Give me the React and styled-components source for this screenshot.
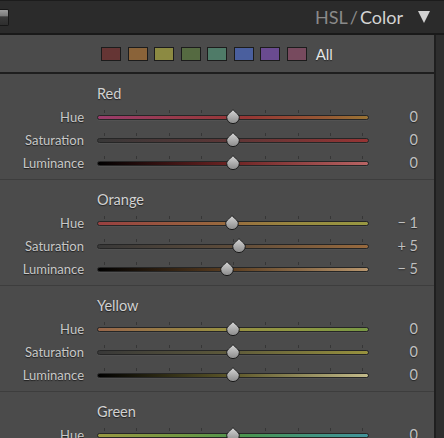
import React, { useId } from "react";
import styled, { createGlobalStyle } from "styled-components";

const GlobalStyle = createGlobalStyle`
  body {
    margin: 0;
    background: #4b4b4b;
    font-family: Lato, "Liberation Sans", sans-serif;
  }
`;

const Container = styled.div`
  width: 444px;
  height: 438px;
  overflow: hidden;
  display: flex;
  flex-direction: column;
  background: #4b4b4b;
`;

const Header = styled.div`
  height: 32px;
  flex-shrink: 0;
  background: #2b2b2b;
  border-top: 1px solid #1c1c1c;
  border-bottom: 2px solid #191919;
  display: flex;
  align-items: center;
  justify-content: space-between;
  padding-right: 14px;
`;

const Tab = styled.div`
  width: 9px;
  height: 17px;
  margin-top: 1px;
  box-sizing: border-box;
  border: 1px solid #171717;
  border-left: none;
  border-radius: 0 2px 2px 0;
  background: linear-gradient(180deg, #9c9c9c 0%, #7a7a7a 40%, #3a3a3a 45%, #2e2e2e 100%);
`;

const Title = styled.div`
  display: flex;
  align-items: center;
  font-size: 18px;
  color: #8a8a8a;
`;

const Slash = styled.span`
  margin: 0 2px;
`;

const Bright = styled.span`
  color: #d4d4d4;
`;

const Caret = styled.span`
  width: 0;
  height: 0;
  margin-left: 15px;
  border-left: 6px solid transparent;
  border-right: 6px solid transparent;
  border-top: 12px solid #d2d2d2;
`;

const Body = styled.div`
  flex: 1;
  display: flex;
  min-height: 0;
`;

const Panel = styled.div`
  flex: 1;
  border-right: 2px solid #1f1f1f;
`;

const Strip = styled.div`
  width: 8px;
  background: #2e2e2e;
`;

const SwatchRow = styled.div`
  height: 37px;
  display: flex;
  align-items: center;
  justify-content: center;
  gap: 6.5px;
  border-bottom: 2px solid #1e1e1e;
`;

const Swatch = styled.div`
  width: 20px;
  height: 14px;
  box-sizing: border-box;
  border: 1px solid #1c1c1c;
  background: ${(p) => p.$color};
`;

const All = styled.span`
  margin-left: 2.5px;
  font-size: 15px;
  color: #e6e6e6;
  text-shadow: 0 1px 1px rgba(0, 0, 0, 0.5);
`;

const Section = styled.div`
  padding: 8px 0 5px;
  border-bottom: 1px solid #3d3d3d;
`;

const Row = styled.div`
  display: grid;
  grid-template-columns: 84px 272px 36px;
  column-gap: 13px;
  height: 23px;
  align-items: center;
`;

const Heading = styled.div`
  grid-column: 2;
  font-size: 14.5px;
  color: #d2d2d2;
  text-shadow: 0 1px 1px rgba(0, 0, 0, 0.55);
`;

const Label = styled.div`
  text-align: right;
  font-size: 13px;
  color: #c8c8c8;
  text-shadow: 0 1px 1px rgba(0, 0, 0, 0.6);
`;

const Value = styled.div`
  text-align: right;
  font-size: 14.5px;
  color: #c0c0c0;
  white-space: pre;
  text-shadow: 0 1px 1px rgba(0, 0, 0, 0.5);
`;

const Slider = styled.div`
  position: relative;
  height: 23px;
`;

const Track = styled.div`
  position: absolute;
  left: 0;
  right: 0;
  top: 10px;
  height: 3px;
  border: 1px solid #262626;
  border-radius: 3px;
  background: ${(p) => p.$gradient};
  box-shadow: 0 1px 0 rgba(255, 255, 255, 0.04);
`;

const Tick = styled.div`
  position: absolute;
  top: 5px;
  width: 1px;
  height: 3px;
  background: #363636;
`;

const Knob = styled.svg`
  position: absolute;
  top: 4px;
  width: 14px;
  height: 15px;
`;

const TICKS = [0, 1, 2, 3, 4, 5, 6, 7, 8];

const sections = [
  {
    name: "Red",
    rows: [
      { label: "Hue", value: 0, track: "linear-gradient(90deg, #9a3c6c 0%, #983a4a 30%, #963634 55%, #965a34 85%, #9a7434 100%)" },
      { label: "Saturation", value: 0, track: "linear-gradient(90deg, #383838 0%, #5e3636 50%, #963434 100%)" },
      { label: "Luminance", value: 0, track: "linear-gradient(90deg, #000 0%, #6e2424 50%, #b86464 100%)" },
    ],
  },
  {
    name: "Orange",
    rows: [
      { label: "Hue", value: -1, track: "linear-gradient(90deg, #984040 0%, #98683e 45%, #988a40 75%, #989842 100%)" },
      { label: "Saturation", value: 5, track: "linear-gradient(90deg, #383838 0%, #5e4c3a 50%, #986a3e 100%)" },
      { label: "Luminance", value: -5, track: "linear-gradient(90deg, #000 0%, #5e4022 50%, #b8966e 100%)" },
    ],
  },
  {
    name: "Yellow",
    rows: [
      { label: "Hue", value: 0, track: "linear-gradient(90deg, #98664a 0%, #988e42 45%, #8e9842 75%, #789844 100%)" },
      { label: "Saturation", value: 0, track: "linear-gradient(90deg, #383838 0%, #5e5a3a 50%, #98923e 100%)" },
      { label: "Luminance", value: 0, track: "linear-gradient(90deg, #000 0%, #5e582a 50%, #c2ba8a 100%)" },
    ],
  },
  {
    name: "Green",
    rows: [
      { label: "Hue", value: 0, track: "linear-gradient(90deg, #989842 0%, #749842 30%, #4a9450 55%, #429480 80%, #42949a 100%)" },
      { label: "Saturation", value: 0, track: "linear-gradient(90deg, #383838 0%, #405840 50%, #469446 100%)" },
      { label: "Luminance", value: 0, track: "linear-gradient(90deg, #000 0%, #285628 50%, #8aba8a 100%)" },
    ],
  },
];

const swatches = ["#653534", "#8a6339", "#8c8a42", "#556a41", "#4f7b68", "#4a5f9e", "#6a4b90", "#774a5e"];

const formatValue = (v) => {
  if (v === 0) return "0";
  return (v > 0 ? "+ " : "\u2212 ") + Math.abs(v);
};

const Thumb = ({ value }) => {
  const id = useId();
  const center = 7 + ((value + 100) / 200) * 258;
  return (
    <Knob viewBox="0 0 14 15" style={{ left: center - 7 }}>
      <defs>
        <linearGradient id={id} x1="0" y1="0" x2="0" y2="1">
          <stop offset="0" stopColor="#d6d6d6" />
          <stop offset="1" stopColor="#8a8a8a" />
        </linearGradient>
      </defs>
      <path
        d="M7 0.6 C8 2.6 13.3 5.2 13.3 8.3 A6.3 6.3 0 0 1 0.7 8.3 C0.7 5.2 6 2.6 7 0.6 Z"
        fill={`url(#${id})`}
        stroke="#1a1a1a"
        strokeWidth="1"
      />
    </Knob>
  );
};

const SliderRow = ({ label, value, track }) => (
  <Row>
    <Label>{label}</Label>
    <Slider>
      {TICKS.map((i) => (
        <Tick key={i} style={{ left: Math.round(7 + i * 32.25) }} />
      ))}
      <Track $gradient={track} />
      <Thumb value={value} />
    </Slider>
    <Value>{formatValue(value)}</Value>
  </Row>
);

const App = () => {
  return (
    <Container>
      <GlobalStyle />
      <Header>
        <Tab />
        <Title>
          HSL<Slash>/</Slash>
          <Bright>Color</Bright>
          <Caret />
        </Title>
      </Header>
      <Body>
        <Panel>
          <SwatchRow>
            {swatches.map((c) => (
              <Swatch key={c} $color={c} />
            ))}
            <All>All</All>
          </SwatchRow>
          {sections.map((s) => (
            <Section key={s.name}>
              <Row>
                <Heading>{s.name}</Heading>
              </Row>
              {s.rows.map((r) => (
                <SliderRow key={r.label} {...r} />
              ))}
            </Section>
          ))}
        </Panel>
        <Strip />
      </Body>
    </Container>
  );
};

export default App;
